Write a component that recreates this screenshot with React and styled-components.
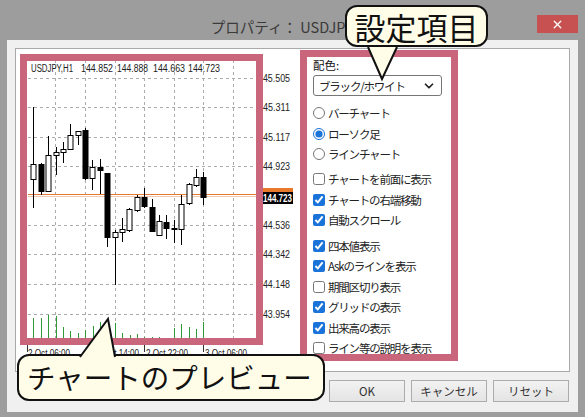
import React from "react";
import styled, { createGlobalStyle } from "styled-components";
import { ChevronDown, X } from "lucide-react";

const GlobalStyle = createGlobalStyle`
  html, body {
    margin: 0;
    padding: 0;
  }
  body {
    font-family: "Noto Sans CJK JP", "Noto Sans", sans-serif;
  }
`;

// candle: x, wick top, wick bottom, body top, body bottom, filled (bear)
const candles = [
  [33, 107, 208, 164, 179, 0],
  [41, 163, 195, 164, 191, 1],
  [48, 136, 192, 155, 191, 0],
  [56, 147, 175, 152, 155, 0],
  [63, 142, 163, 149, 152, 0],
  [70, 124, 150, 135, 149, 0],
  [78, 131, 145, 131, 135, 0],
  [85, 128, 180, 130, 178, 1],
  [92, 160, 190, 167, 178, 0],
  [100, 159, 194, 167, 170, 1],
  [107, 173, 247, 173, 237, 1],
  [115, 230, 285, 232, 237, 0],
  [122, 218, 242, 229, 232, 0],
  [129, 208, 232, 209, 230, 0],
  [137, 195, 212, 197, 210, 0],
  [144, 188, 208, 197, 206, 1],
  [152, 199, 231, 207, 231, 1],
  [159, 215, 236, 221, 235, 0],
  [166, 215, 239, 222, 228, 1],
  [174, 220, 243, 228, 229, 1],
  [181, 195, 245, 204, 229, 0],
  [189, 183, 205, 184, 203, 0],
  [196, 169, 187, 177, 185, 0],
  [203, 172, 205, 177, 197, 1],
];

const volumes = [
  [33, 318], [41, 318], [48, 315], [56, 316], [63, 327], [70, 331],
  [78, 333], [85, 330], [93, 326], [100, 322], [108, 322], [115, 323],
  [122, 333], [130, 335], [137, 334], [144, 337], [152, 337], [159, 337],
  [174, 328], [181, 324], [189, 327], [196, 329], [203, 322],
];

const priceLabels = [
  ["145.505", 78], ["145.311", 107], ["145.117", 137], ["144.923", 166],
  ["144.536", 225], ["144.342", 254], ["144.148", 284], ["143.954", 314],
];

const hGrid = [78, 107, 137, 166, 196, 225, 254, 284, 314];
const vGrid = [55, 85, 115, 144, 174, 203, 233];

const timeLabels = [
  ["2 Oct 06:00", 28],
  ["2 Oct 14:00", 97],
  ["2 Oct 22:00", 146],
  ["3 Oct 06:00", 205],
];

const header = [
  ["USDJPY,H1", 31, 42],
  ["144.852", 81, 32],
  ["144.888", 117, 31],
  ["144.663", 153, 32],
  ["144.723", 188, 32],
];

const Chart = () => (
  <ChartSvg width="275" height="305" viewBox="22 56 275 305">
    {hGrid.map((y) => (
      <line key={"h" + y} x1="28" x2="258" y1={y + 0.5} y2={y + 0.5}
        stroke="#ababab" strokeDasharray="3 3" />
    ))}
    {vGrid.map((x) => (
      <line key={"v" + x} x1={x + 0.5} x2={x + 0.5} y1="60" y2="340"
        stroke="#ababab" strokeDasharray="3 3" />
    ))}

    {header.map(([t, x, w]) => (
      <text key={t} x={x} y="72" fontSize="10" fill="#222"
        textLength={w} lengthAdjust="spacingAndGlyphs">{t}</text>
    ))}

    <line x1="28" x2="262" y1="194.5" y2="194.5" stroke="#e27a34" />
    <line x1="28" x2="262" y1="196.5" y2="196.5" stroke="#f3c9ac" />

    {volumes.map(([x, top]) => (
      <line key={"vol" + x} x1={x + 0.5} x2={x + 0.5} y1={top} y2="339"
        stroke="#2f9a35" />
    ))}

    {candles.map(([x, hi, lo, bt, bb, bear]) => (
      <g key={"c" + x}>
        <line x1={x + 0.5} x2={x + 0.5} y1={hi} y2={lo} stroke="#000" />
        <rect x={x - 2} y={bt + 0.5} width="5" height={Math.max(bb - bt, 1)}
          fill={bear ? "#000" : "#fff"} stroke="#000" />
      </g>
    ))}

    {priceLabels.map(([t, y]) => (
      <text key={t} x="258" y={y + 3.5} fontSize="10" fill="#222"
        textLength="32" lengthAdjust="spacingAndGlyphs">{t}</text>
    ))}

    <rect x="262" y="188" width="31" height="6" fill="#e8782c" />
    <rect x="262" y="192" width="31" height="12" fill="#000" />
    <text x="263" y="201.5" fontSize="10" fontWeight="bold" fill="#fff"
      textLength="29" lengthAdjust="spacingAndGlyphs">144.723</text>

    {[27, 144, 203].map((x) => (
      <line key={"t" + x} x1={x + 0.5} x2={x + 0.5} y1="340" y2="352" stroke="#333" />
    ))}
    {timeLabels.map(([t, x]) => (
      <text key={t} x={x} y="357" fontSize="10" fill="#222"
        textLength="42" lengthAdjust="spacingAndGlyphs">{t}</text>
    ))}
  </ChartSvg>
);

const Tail = ({ points, left, top, width, height }) => {
  const [a, b, c] = points;
  return (
    <TailSvg width={width} height={height} $left={left} $top={top}>
      <polygon points={`${a} ${b} ${c}`} fill="#fffde8" />
      <polyline points={`${a} ${b} ${c}`} fill="none" stroke="#111"
        strokeWidth="2" strokeLinejoin="miter" />
    </TailSvg>
  );
};

const options = [
  { type: "radio", label: "バーチャート" },
  { type: "radio", label: "ローソク足", on: true },
  { type: "radio", label: "ラインチャート" },
];
const checksA = [
  { label: "チャートを前面に表示" },
  { label: "チャートの右端移動", on: true },
  { label: "自動スクロール", on: true },
];
const checksB = [
  { label: "四本値表示", on: true },
  { label: "Askのラインを表示", on: true },
  { label: "期間区切り表示" },
  { label: "グリッドの表示", on: true },
  { label: "出来高の表示", on: true },
  { label: "ライン等の説明を表示" },
];

export default function App() {
  return (
    <>
      <GlobalStyle />
      <Window>
        <TitleBar>
          <Title>プロパティ： USDJPY,H1</Title>
          <CloseButton>
            <X size={13} strokeWidth={2.5} />
          </CloseButton>
        </TitleBar>

        <Body>
          <Panel>
            <ChartSection>
              <Chart />
              <Highlight $left={4} $top={5} $width={243} $height={291} />
            </ChartSection>

            <Settings>
              <FieldLabel>配色:</FieldLabel>
              <SelectBox>
                <span>ブラック/ホワイト</span>
                <ChevronDown size={14} strokeWidth={3} />
              </SelectBox>

              <Group $gap={7}>
                {options.map((o) => (
                  <OptionRow key={o.label}>
                    <Control type="radio" name="kind" defaultChecked={!!o.on} />
                    <span>{o.label}</span>
                  </OptionRow>
                ))}
              </Group>

              <Group $gap={4.5}>
                {checksA.map((o) => (
                  <OptionRow key={o.label}>
                    <Control type="checkbox" defaultChecked={!!o.on} />
                    <span>{o.label}</span>
                  </OptionRow>
                ))}
              </Group>

              <Group $gap={5}>
                {checksB.map((o) => (
                  <OptionRow key={o.label}>
                    <Control type="checkbox" defaultChecked={!!o.on} />
                    <span>{o.label}</span>
                  </OptionRow>
                ))}
              </Group>

              <Highlight $left={0} $top={1} $width={158} $height={311} />
            </Settings>
          </Panel>

          <ButtonRow>
            <DialogButton>OK</DialogButton>
            <DialogButton>キャンセル</DialogButton>
            <DialogButton>リセット</DialogButton>
          </ButtonRow>
        </Body>

        <Callout $left={345} $top={5} $width={143} $height={42} $size={31} $center>
          設定項目
          <Tail points={["6,2", "20,34", "35,2"]} left={15} top={38} width={42} height={38} />
        </Callout>

        <Callout $left={17} $top={354} $width={308} $height={47} $size={28.5}>
          チャートのプレビュー
          <Tail points={["6,40", "34,2", "41,40"]} left={55} top={-39} width={48} height={42} />
        </Callout>
      </Window>
    </>
  );
}

const Window = styled.div`
  position: relative;
  width: 585px;
  height: 417px;
  background: #9d9d9d;
  display: flex;
  flex-direction: column;
  overflow: hidden;
`;

const TitleBar = styled.div`
  height: 40px;
  display: grid;
  grid-template-columns: 1fr auto 1fr;
  align-items: start;
`;

const Title = styled.div`
  grid-column: 2;
  margin-top: 17px;
  font-size: 14.5px;
  line-height: 20px;
  color: #3a3a3a;
  white-space: nowrap;
`;

const CloseButton = styled.div`
  grid-column: 3;
  justify-self: end;
  margin: 15px 7px 0 0;
  width: 41px;
  height: 18px;
  background: #c75050;
  color: #fff;
  display: flex;
  align-items: center;
  justify-content: center;
`;

const Body = styled.div`
  flex: 1;
  margin: 0 7px 5px;
  background: #f0f0f0;
  padding: 8px 8px 0;
  display: flex;
  flex-direction: column;
`;

const Panel = styled.div`
  height: 324px;
  box-sizing: border-box;
  background: #fff;
  border: 1px solid #a9a9a9;
  display: flex;
`;

const ChartSection = styled.div`
  position: relative;
  width: 284px;
  box-sizing: border-box;
  padding: 7px 0 0 6px;
`;

const ChartSvg = styled.svg`
  display: block;
  font-family: "Liberation Sans", Arial, sans-serif;
`;

const Highlight = styled.div`
  position: absolute;
  left: ${(p) => p.$left}px;
  top: ${(p) => p.$top}px;
  width: ${(p) => p.$width}px;
  height: ${(p) => p.$height}px;
  box-sizing: border-box;
  border: 7px solid #c9667c;
  pointer-events: none;
`;

const Settings = styled.div`
  position: relative;
  width: 158px;
  box-sizing: border-box;
  padding: 8px 0 0 13px;
  display: flex;
  flex-direction: column;
`;

const FieldLabel = styled.div`
  font-size: 11.5px;
  line-height: 16px;
  color: #111;
`;

const SelectBox = styled.div`
  margin-top: 2px;
  width: 129px;
  height: 21px;
  box-sizing: border-box;
  border: 1px solid #767676;
  border-radius: 3px;
  padding: 0 5px 0 5px;
  display: flex;
  align-items: center;
  justify-content: space-between;
  font-size: 11.5px;
  letter-spacing: -1.2px;
  color: #222;
`;

const Group = styled.div`
  margin-top: ${(p) => p.$gap}px;
  display: flex;
  flex-direction: column;
`;

const OptionRow = styled.label`
  height: 20.5px;
  display: flex;
  align-items: center;
  gap: 3px;
  font-size: 11.5px;
  letter-spacing: -1.2px;
  color: #222;
  white-space: nowrap;
`;

const Control = styled.input`
  margin: 0;
  width: 12px;
  height: 12px;
  accent-color: #1a73d9;
`;

const ButtonRow = styled.div`
  margin-top: 8px;
  padding-right: 1px;
  display: flex;
  justify-content: flex-end;
  gap: 6px;
`;

const DialogButton = styled.div`
  width: 76px;
  height: 22px;
  box-sizing: border-box;
  border: 1px solid #acacac;
  background: linear-gradient(#f2f2f2, #e4e4e4);
  display: flex;
  align-items: center;
  justify-content: center;
  font-size: 11.5px;
  color: #333;
`;

const Callout = styled.div`
  position: absolute;
  left: ${(p) => p.$left}px;
  top: ${(p) => p.$top}px;
  width: ${(p) => p.$width}px;
  height: ${(p) => p.$height}px;
  box-sizing: border-box;
  background: #fffde8;
  border: 2px solid #111;
  border-radius: 12px;
  display: flex;
  align-items: center;
  justify-content: ${(p) => (p.$center ? "center" : "flex-start")};
  padding-left: ${(p) => (p.$center ? 0 : 8)}px;
  font-size: ${(p) => p.$size}px;
  line-height: 1;
  color: #111;
  white-space: nowrap;
`;

const TailSvg = styled.svg`
  position: absolute;
  left: ${(p) => p.$left}px;
  top: ${(p) => p.$top}px;
  overflow: visible;
`;
